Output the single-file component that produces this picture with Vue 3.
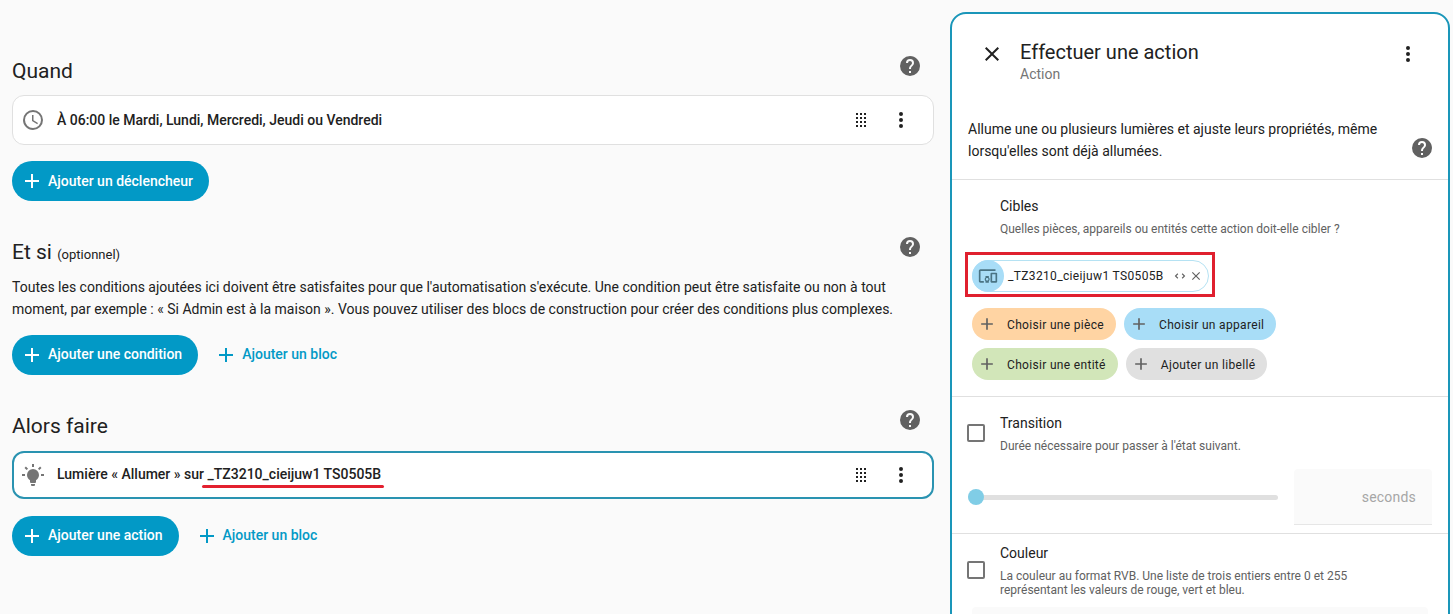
<script setup>
const mdi = {
  help: 'M15.07,11.25L14.17,12.17C13.45,12.89 13,13.5 13,15H11V14.5C11,13.39 11.45,12.39 12.17,11.67L13.41,10.41C13.78,10.05 14,9.55 14,9C14,7.89 13.1,7 12,7A2,2 0 0,0 10,9H8A4,4 0 0,1 12,5A4,4 0 0,1 16,9C16,9.88 15.64,10.67 15.07,11.25M13,19H11V17H13M12,2A10,10 0 0,0 2,12A10,10 0 0,0 12,22A10,10 0 0,0 22,12C22,6.47 17.5,2 12,2Z',
  clock: 'M12,20A8,8 0 0,0 20,12A8,8 0 0,0 12,4A8,8 0 0,0 4,12A8,8 0 0,0 12,20M12,2A10,10 0 0,1 22,12A10,10 0 0,1 12,22C6.47,22 2,17.5 2,12A10,10 0 0,1 12,2M12.5,7V12.25L17,14.92L16.25,16.15L11,13V7H12.5Z',
  dots: 'M12,16A2,2 0 0,1 14,18A2,2 0 0,1 12,20A2,2 0 0,1 10,18A2,2 0 0,1 12,16M12,10A2,2 0 0,1 14,12A2,2 0 0,1 12,14A2,2 0 0,1 10,12A2,2 0 0,1 12,10M12,4A2,2 0 0,1 14,6A2,2 0 0,1 12,8A2,2 0 0,1 10,6A2,2 0 0,1 12,4Z',
  drag: 'M7,19V17H9V19H7M11,19V17H13V19H11M15,19V17H17V19H15M7,15V13H9V15H7M11,15V13H13V15H11M15,15V13H17V15H15M7,11V9H9V11H7M11,11V9H13V11H11M15,11V9H17V11H15M7,7V5H9V7H7M11,7V5H13V7H11M15,7V5H17V7H15Z',
  bulb: 'M12,6A6,6 0 0,1 18,12C18,14.22 16.79,16.16 15,17.2V19A1,1 0 0,1 14,20H10A1,1 0 0,1 9,19V17.2C7.21,16.16 6,14.22 6,12A6,6 0 0,1 12,6M14,21V22A1,1 0 0,1 13,23H11A1,1 0 0,1 10,22V21H14M20,11H23V13H20V11M1,11H4V13H1V11M13,1V4H11V1H13M4.92,3.5L7.05,5.64L5.63,7.05L3.5,4.93L4.92,3.5M16.95,5.63L19.07,3.5L20.5,4.93L18.37,7.05L16.95,5.63Z',
  close: 'M19,6.41L17.59,5L12,10.59L6.41,5L5,6.41L10.59,12L5,17.59L6.41,19L12,13.41L17.59,19L19,17.59L13.41,12L19,6.41Z',
  plus: 'M19,13H13V19H11V13H5V11H11V5H13V11H19V13Z',
  devices: 'M3 6H21V4H3C1.9 4 1 4.9 1 6V18C1 19.1 1.9 20 3 20H7V18H3V6M13 12H9V13.78C8.39 14.33 8 15.11 8 16C8 16.89 8.39 17.67 9 18.22V20H13V18.22C13.61 17.67 14 16.88 14 16S13.61 14.33 13 13.78V12M11 17.5C10.17 17.5 9.5 16.83 9.5 16S10.17 14.5 11 14.5 12.5 15.17 12.5 16 11.83 17.5 11 17.5M22 8H16C15.5 8 15 8.5 15 9V19C15 19.5 15.5 20 16 20H22C22.5 20 23 19.5 23 19V9C23 8.5 22.5 8 22 8M21 18H17V10H21V18Z',
  unfold: 'M18.17,12L15,8.83L16.41,7.41L21,12L16.41,16.58L15,15.17L18.17,12M5.83,12L9,15.17L7.59,16.59L3,12L7.59,7.41L9,8.83L5.83,12Z'
}
const pickersTop = [
  { label: 'Choisir une pièce', cls: 'orange' },
  { label: 'Choisir un appareil', cls: 'blue' }
]
const pickersBottom = [
  { label: 'Choisir une entité', cls: 'green' },
  { label: 'Ajouter un libellé', cls: 'grey' }
]
</script>

<template>
  <div class="page">
    <main class="left">
      <section class="sec sec-when">
        <div class="sec-head">
          <h2>Quand</h2>
          <svg class="help" viewBox="0 0 24 24"><path :d="mdi.help" /></svg>
        </div>
        <div class="row">
          <svg class="row-icon" viewBox="0 0 24 24"><path :d="mdi.clock" /></svg>
          <span class="row-text">À 06:00 le Mardi, Lundi, Mercredi, Jeudi ou Vendredi</span>
          <svg class="drag" viewBox="0 0 24 24"><path :d="mdi.drag" /></svg>
          <svg class="menu" viewBox="0 0 24 24"><path :d="mdi.dots" /></svg>
        </div>
        <div class="actions">
          <button class="fab"><svg viewBox="0 0 24 24"><path :d="mdi.plus" /></svg>Ajouter un déclencheur</button>
        </div>
      </section>

      <section class="sec sec-if">
        <div class="sec-head">
          <h2>Et si <small>(optionnel)</small></h2>
          <svg class="help" viewBox="0 0 24 24"><path :d="mdi.help" /></svg>
        </div>
        <p class="intro">Toutes les conditions ajoutées ici doivent être satisfaites pour que l'automatisation s'exécute. Une condition peut être satisfaite ou non à tout moment, par exemple : « Si Admin est à la maison ». Vous pouvez utiliser des blocs de construction pour créer des conditions plus complexes.</p>
        <div class="actions">
          <button class="fab"><svg viewBox="0 0 24 24"><path :d="mdi.plus" /></svg><span class="lift">Ajouter une condition</span></button>
          <button class="link"><svg viewBox="0 0 24 24"><path :d="mdi.plus" /></svg><span class="lift">Ajouter un bloc</span></button>
        </div>
      </section>

      <section class="sec sec-then">
        <div class="sec-head">
          <h2>Alors faire</h2>
          <svg class="help" viewBox="0 0 24 24"><path :d="mdi.help" /></svg>
        </div>
        <div class="row selected">
          <svg class="row-icon" viewBox="0 0 24 24"><path :d="mdi.bulb" /></svg>
          <span class="row-text">Lumière « Allumer » sur <span class="marked">_TZ3210_cieijuw1 TS0505B</span></span>
          <svg class="drag" viewBox="0 0 24 24"><path :d="mdi.drag" /></svg>
          <svg class="menu" viewBox="0 0 24 24"><path :d="mdi.dots" /></svg>
        </div>
        <div class="actions">
          <button class="fab"><svg viewBox="0 0 24 24"><path :d="mdi.plus" /></svg><span class="lift">Ajouter une action</span></button>
          <button class="link"><svg viewBox="0 0 24 24"><path :d="mdi.plus" /></svg><span class="lift">Ajouter un bloc</span></button>
        </div>
      </section>
    </main>

    <aside class="panel">
      <header class="panel-head">
        <svg class="p-close" viewBox="0 0 24 24"><path :d="mdi.close" /></svg>
        <div class="p-titles">
          <div class="p-title">Effectuer une action</div>
          <div class="p-sub">Action</div>
        </div>
        <svg class="p-menu" viewBox="0 0 24 24"><path :d="mdi.dots" /></svg>
      </header>

      <div class="desc">
        <p>Allume une ou plusieurs lumières et ajuste leurs propriétés, même lorsqu'elles sont déjà allumées.</p>
        <svg class="help" viewBox="0 0 24 24"><path :d="mdi.help" /></svg>
      </div>

      <div class="block targets">
        <div class="f-title">Cibles</div>
        <div class="f-sub">Quelles pièces, appareils ou entités cette action doit-elle cibler ?</div>
        <div class="chip-frame">
          <div class="chip">
            <span class="chip-ic"><svg viewBox="0 0 24 24"><path :d="mdi.devices" /></svg></span>
            <span class="chip-label">_TZ3210_cieijuw1 TS0505B</span>
            <svg class="chip-unfold" viewBox="0 0 24 24"><path :d="mdi.unfold" /></svg>
            <svg class="chip-x" viewBox="0 0 24 24"><path :d="mdi.close" /></svg>
          </div>
        </div>
        <div class="pick-row">
          <span v-for="p in pickersTop" :key="p.label" class="pick" :class="p.cls"><svg viewBox="0 0 24 24"><path :d="mdi.plus" /></svg>{{ p.label }}</span>
        </div>
        <div class="pick-row">
          <span v-for="p in pickersBottom" :key="p.label" class="pick" :class="p.cls"><svg viewBox="0 0 24 24"><path :d="mdi.plus" /></svg>{{ p.label }}</span>
        </div>
      </div>

      <div class="block option transition">
        <div class="opt-line">
          <span class="check"></span>
          <div>
            <div class="f-title">Transition</div>
            <div class="f-sub">Durée nécessaire pour passer à l'état suivant.</div>
          </div>
        </div>
        <div class="slider-line">
          <div class="slider"><span class="thumb"></span></div>
          <div class="num">seconds</div>
        </div>
      </div>

      <div class="block option color">
        <div class="opt-line">
          <span class="check"></span>
          <div>
            <div class="f-title">Couleur</div>
            <div class="f-sub tight">La couleur au format RVB. Une liste de trois entiers entre 0 et 255<br />représentant les valeurs de rouge, vert et bleu.</div>
          </div>
        </div>
        <div class="color-field"></div>
      </div>
    </aside>
  </div>
</template>

<style>
html, body { margin: 0; background: #fafafa; }
</style>

<style scoped>
.page {
  display: flex;
  align-items: flex-start;
  gap: 16px;
  height: 614px;
  padding-left: 12px;
  overflow: hidden;
  background: #fafafa;
  font-family: Roboto, sans-serif;
  color: #212121;
}
.left { width: 922px; flex: none; }
svg { display: block; fill: currentColor; flex: none; }

.sec-when { padding-top: 54px; }
.sec-if { padding-top: 34px; }
.sec-then { padding-top: 34px; }

.sec-head {
  display: flex;
  justify-content: space-between;
  align-items: flex-start;
  padding-right: 12px;
  height: 34px;
}
.sec-head h2 {
  margin: 0;
  font-size: 21px;
  font-weight: 400;
  line-height: 34px;
}
.sec-head h2 small { font-size: 13px; }
.help { width: 24px; height: 24px; color: #616161; }
.sec-then .sec-head .help { margin-top: -1px; }

.row {
  display: flex;
  align-items: center;
  box-sizing: border-box;
  height: 50px;
  margin-top: 7px;
  padding: 0 20px 0 8px;
  background: #fff;
  border: 1px solid #e0e0e0;
  border-radius: 12px;
}
.row-icon { width: 24px; height: 24px; color: #757575; }
.row-text {
  flex: 1;
  margin-left: 12px;
  font-size: 14px;
  font-weight: 500;
}
.drag { width: 24px; height: 24px; color: #212121; }
.menu { width: 24px; height: 24px; margin-left: 16px; color: #212121; }

.row.selected {
  height: 48px;
  margin-top: 8px;
  border: 2px solid #2a93b1;
  padding: 0 19px 0 7px;
}
.row.selected .row-text { margin-top: -2px; }
.marked { position: relative; }
.marked::after {
  content: '';
  position: absolute;
  left: -6px;
  right: -3px;
  top: 19px;
  height: 3px;
  border-radius: 1.5px;
  background: #e3202f;
}

.actions {
  display: flex;
  align-items: center;
  gap: 16px;
  margin-top: 16px;
}
.sec-then .actions { margin-top: 17px; }
.lift { margin-top: -2px; }
.fab, .link {
  display: flex;
  align-items: center;
  border: 0;
  font: 500 14px Roboto, sans-serif;
  background: none;
  padding: 0;
}
.fab {
  height: 40px;
  padding: 0 16px 0 8px;
  gap: 4px;
  border-radius: 20px;
  background: #0299c6;
  color: #fff;
}
.fab svg { width: 24px; height: 24px; }
.link { color: #0299c6; gap: 4px; }
.link svg { width: 24px; height: 24px; }

.intro {
  margin: 0 0 -1px;
  font-size: 14px;
  line-height: 22px;
  color: #212121;
  padding-top: 7px;
}

.panel {
  box-sizing: border-box;
  flex: none;
  width: 500px;
  height: 640px;
  margin-top: 12px;
  background: #fff;
  border: 2px solid #1a96b9;
  border-radius: 16px;
}
.panel-head {
  display: flex;
  align-items: flex-start;
  padding: 28px 28px 0 28px;
  height: 60px;
}
.p-close { width: 24px; height: 24px; color: #212121; }
.p-titles { flex: 1; margin-left: 16px; margin-top: -3px; }
.p-title { font-size: 20px; line-height: 26px; color: #212121; }
.p-sub { font-size: 14px; line-height: 18px; color: #757575; }
.p-menu { width: 24px; height: 24px; color: #212121; }

.desc {
  display: flex;
  align-items: flex-end;
  justify-content: space-between;
  box-sizing: border-box;
  height: 78px;
  padding: 16px 14px 0 16px;
  border-bottom: 1px solid #e0e0e0;
}
.desc p {
  margin: 0;
  width: 420px;
  font-size: 14px;
  line-height: 22px;
  align-self: flex-start;
}
.desc .help { margin-bottom: 19px; }

.block { border-bottom: 1px solid #e0e0e0; box-sizing: border-box; }
.f-title { font-size: 14px; line-height: 20px; color: #212121; }
.f-sub { font-size: 12px; line-height: 16px; margin-top: 5px; color: #616161; }
.f-sub.tight { line-height: 14px; margin-top: 6px; }

.targets { height: 217px; padding: 16px 0 0 20px; }
.targets > .f-title, .targets > .f-sub { margin-left: 28px; }
.chip-frame {
  width: 250px;
  box-sizing: border-box;
  margin: 15px 0 0 -7px;
  padding: 5px 3px 2px 4px;
  height: 45px;
  border: 3px solid #e0202f;
}
.chip {
  display: flex;
  align-items: center;
  box-sizing: border-box;
  width: 237px;
  height: 32px;
  border: 1px solid #b5e2f3;
  border-radius: 16px;
  background: #fff;
}
.chip-ic {
  display: flex;
  align-items: center;
  justify-content: center;
  width: 32px;
  height: 32px;
  margin: -1px 0 -1px -1px;
  border-radius: 50%;
  background: #a8ddf7;
  color: #4a7484;
}
.chip-ic svg { width: 20px; height: 20px; }
.chip-label { margin-left: 4px; font-size: 12px; letter-spacing: 0.35px; color: #212121; flex: 1; white-space: nowrap; }
.chip-unfold { width: 14px; height: 14px; color: #616161; }
.chip-x { width: 14px; height: 14px; margin: 0 5px 0 2px; color: #616161; }

.pick-row { display: flex; gap: 8px; margin-top: 8px; }
.chip-frame + .pick-row { margin-top: 11px; }
.pick {
  display: flex;
  align-items: center;
  box-sizing: border-box;
  height: 32px;
  padding: 2px 12px 0 5px;
  border-radius: 16px;
  font-size: 12px;
  letter-spacing: 0.32px;
  color: #212121;
  white-space: nowrap;
  gap: 10px;
}
.pick svg { width: 20px; height: 20px; margin-top: -2px; color: #616161; }
.pick.orange { background: #ffd4a3; }
.pick.blue { background: #a8ddf7; }
.pick.green { background: #d2e6b9; }
.pick.grey { background: #e0e0e0; }

.option { padding: 0 16px; }
.opt-line { display: flex; align-items: center; gap: 15px; }
.check {
  width: 18px;
  height: 18px;
  box-sizing: border-box;
  border: 2px solid #757575;
  border-radius: 2px;
  flex: none;
  margin: -1px 0 0 -1px;
}
.transition { height: 137px; padding-top: 16px; }
.slider-line {
  display: flex;
  align-items: center;
  gap: 16px;
  margin-top: 15px;
}
.slider {
  flex: 1;
  height: 5px;
  border-radius: 3px;
  background: #e0e0e0;
  display: flex;
  align-items: center;
}
.thumb { width: 16px; height: 16px; border-radius: 50%; background: #80cde6; }
.num {
  box-sizing: border-box;
  width: 138px;
  height: 56px;
  display: flex;
  align-items: center;
  justify-content: flex-end;
  padding-right: 16px;
  font-size: 14px;
  letter-spacing: 0.2px;
  color: #a6a6a6;
  background: #fafafa;
  border-radius: 4px 4px 0 0;
  border-bottom: 1px solid #e6e6e6;
}
.color { padding-top: 9px; border-bottom: 0; }
.color-field {
  margin: 10px 4px 0;
  height: 56px;
  background: #fafafa;
  border-radius: 4px 4px 0 0;
}
</style>
